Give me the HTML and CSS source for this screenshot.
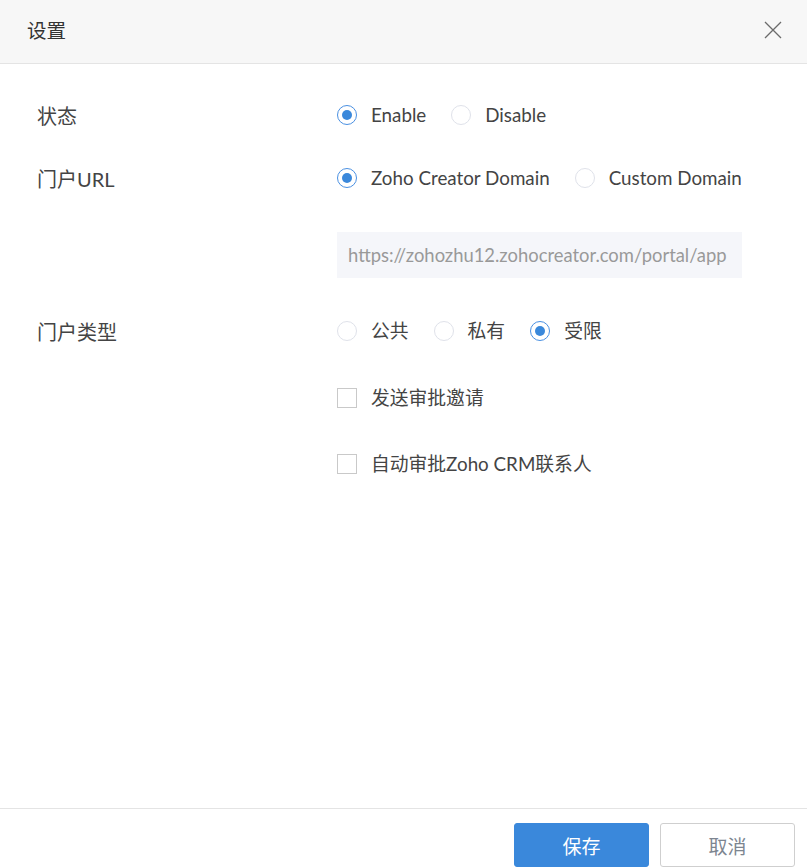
FILE: index.html
```html
<!DOCTYPE html>
<html lang="zh">
<head>
<meta charset="utf-8">
<link rel="stylesheet" href="styles.css">
</head>
<body>
<div class="dialog">
  <div class="header">
    <span class="title">设置</span>
    <svg class="close" width="18" height="18" viewBox="0 0 18 18"><path d="M1 1L17 17M17 1L1 17" stroke="#6b6b6b" stroke-width="1.3" fill="none"/></svg>
  </div>
  <div class="body">
    <div class="row r1">
      <div class="label">状态</div>
      <div class="field">
        <span class="opt"><span class="radio on"></span>Enable</span>
        <span class="opt"><span class="radio"></span>Disable</span>
      </div>
    </div>
    <div class="row r2">
      <div class="label">门户URL</div>
      <div class="field">
        <span class="opt"><span class="radio on"></span>Zoho Creator Domain</span>
        <span class="opt"><span class="radio"></span>Custom Domain</span>
      </div>
    </div>
    <div class="row r3">
      <div class="label"></div>
      <div class="field">
        <div class="url">https://zohozhu12.zohocreator.com/portal/app</div>
      </div>
    </div>
    <div class="row r4">
      <div class="label">门户类型</div>
      <div class="field">
        <span class="opt"><span class="radio"></span>公共</span>
        <span class="opt"><span class="radio"></span>私有</span>
        <span class="opt"><span class="radio on"></span>受限</span>
      </div>
    </div>
    <div class="row r5">
      <div class="label"></div>
      <div class="field">
        <span class="opt"><span class="check"></span>发送审批邀请</span>
      </div>
    </div>
    <div class="row r6">
      <div class="label"></div>
      <div class="field">
        <span class="opt"><span class="check"></span>自动审批Zoho CRM联系人</span>
      </div>
    </div>
  </div>
  <div class="footer">
    <button class="btn primary">保存</button>
    <button class="btn secondary">取消</button>
  </div>
</div>
</body>
</html>
```

FILE: styles.css
```css
* { box-sizing: border-box; }
html, body { margin: 0; padding: 0; background: #fff; }
body {
  font-family: Lato, "Noto Sans CJK SC", sans-serif;
  color: #444;
  font-size: 18px;
}
.dialog {
  width: 807px;
  height: 867px;
  display: flex;
  flex-direction: column;
  overflow: hidden;
}
.header {
  height: 64px;
  background: #f7f7f7;
  border-bottom: 1px solid #e4e4e4;
  display: flex;
  align-items: center;
  justify-content: space-between;
  padding: 0 25px 4px 27px;
  flex-shrink: 0;
}
.title { font-size: 19.5px; color: #333; }
.close { display: block; }
.body {
  flex: 1;
  padding: 36px 0 0 37px;
}
.row {
  display: flex;
  align-items: center;
}
.label {
  width: 300px;
  flex-shrink: 0;
  font-size: 20px;
  color: #444;
}
.field {
  display: flex;
  align-items: center;
}
.r1, .r2, .r4, .r5, .r6 { height: 30px; }
.r2 { margin-top: 33px; }
.r3 { margin-top: 39px; }
.r4 { margin-top: 38px; }
.r5 { margin-top: 37px; }
.r6 { margin-top: 36px; }
.opt {
  display: inline-flex;
  align-items: center;
  margin-right: 25px;
  font-size: 18.8px;
  color: #444;
  line-height: 30px;
}
.radio {
  width: 20px;
  height: 20px;
  border-radius: 50%;
  border: 1px solid #dfe2ea;
  margin-right: 14px;
  position: relative;
  flex-shrink: 0;
}
.radio.on { border-color: #4a90e2; }
.radio.on::after {
  content: "";
  position: absolute;
  left: 4px; top: 4px;
  width: 10px; height: 10px;
  border-radius: 50%;
  background: #3a88db;
}
.check {
  width: 20px;
  height: 20px;
  border: 1px solid #c9c9c9;
  margin-right: 14px;
  flex-shrink: 0;
}
.url {
  width: 405px;
  height: 46px;
  background: #f5f6fa;
  color: #999;
  font-size: 18.4px;
  line-height: 46px;
  padding-left: 11px;
  white-space: nowrap;
}
.footer {
  height: 59px;
  border-top: 1px solid #e4e4e4;
  display: flex;
  justify-content: flex-end;
  padding: 14px 12px 0 0;
  gap: 11px;
  flex-shrink: 0;
}
.btn {
  width: 135px;
  height: 44px;
  border-radius: 3px;
  font-family: Lato, "Noto Sans CJK SC", sans-serif;
  font-size: 19px;
  padding: 0;
}
.primary {
  background: #3a88db;
  border: 1px solid #3a88db;
  color: #fff;
}
.secondary {
  background: #fff;
  border: 1px solid #cfcfcf;
  color: #7d8590;
}
```
